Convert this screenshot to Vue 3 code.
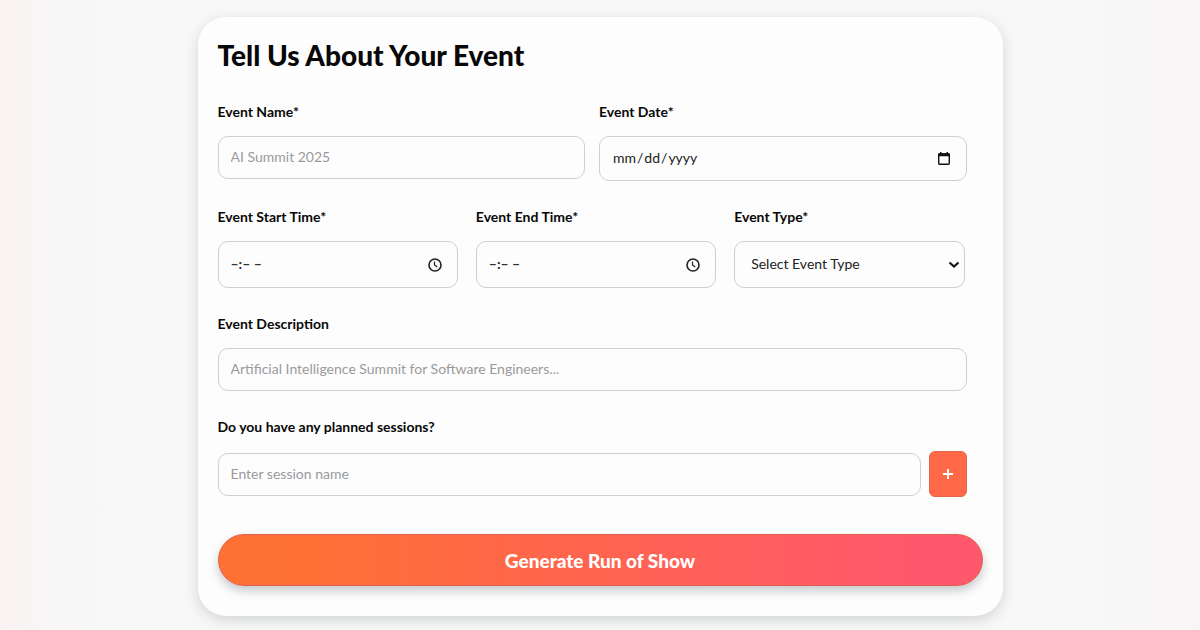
<script setup>
import { ref } from 'vue'

const name = ref('')
const date = ref('')
const start = ref('')
const end = ref('')
const type = ref('')
const description = ref('')
const session = ref('')
const sessions = ref([])

function addSession() {
  const value = session.value.trim()
  if (!value) return
  sessions.value.push(value)
  session.value = ''
}
</script>

<template>
  <main class="page">
    <form class="card" @submit.prevent>
      <h1 class="title">Tell Us About Your Event</h1>

      <div class="rows">
        <div class="row halves">
          <div class="field">
            <label for="name">Event Name*</label>
            <input id="name" v-model="name" class="control" type="text" placeholder="AI Summit 2025" />
          </div>
          <div class="field">
            <label for="date">Event Date*</label>
            <div class="picker">
              <input id="date" v-model="date" class="control date" type="date" />
              <svg class="icon" viewBox="0 0 16 16" aria-hidden="true">
                <rect x="2.7" y="3" width="10.6" height="10.3" rx="1" fill="none" stroke="#111" stroke-width="1.4" />
                <path d="M2.2 2.3h11.6v3H2.2zM4 1h1.5v2H4zM10.5 1H12v2h-1.5z" fill="#111" />
              </svg>
            </div>
          </div>
        </div>

        <div class="row thirds">
          <div class="field">
            <label for="start">Event Start Time*</label>
            <div class="picker">
              <input id="start" v-model="start" class="control time" type="text" placeholder="–:– –" />
              <svg class="icon" viewBox="0 0 16 16" aria-hidden="true">
                <circle cx="8" cy="8" r="6" fill="none" stroke="#222" stroke-width="1.6" />
                <path d="M7.5 4.5V8l2.8 2" fill="none" stroke="#222" stroke-width="1.2" />
              </svg>
            </div>
          </div>
          <div class="field">
            <label for="end">Event End Time*</label>
            <div class="picker">
              <input id="end" v-model="end" class="control time" type="text" placeholder="–:– –" />
              <svg class="icon" viewBox="0 0 16 16" aria-hidden="true">
                <circle cx="8" cy="8" r="6" fill="none" stroke="#222" stroke-width="1.6" />
                <path d="M7.5 4.5V8l2.8 2" fill="none" stroke="#222" stroke-width="1.2" />
              </svg>
            </div>
          </div>
          <div class="field">
            <label for="type">Event Type*</label>
            <div class="picker">
              <select id="type" v-model="type" class="control select">
                <option value="">Select Event Type</option>
                <option>Conference</option>
                <option>Workshop</option>
              </select>
              <svg class="chevron" viewBox="0 0 12 12" aria-hidden="true">
                <path d="M1.5 3.5 6 7.5l4.5-4" fill="none" stroke="#111" stroke-width="2.2" />
              </svg>
            </div>
          </div>
        </div>

        <div class="field">
          <label for="description">Event Description</label>
          <input id="description" v-model="description" class="control" type="text" placeholder="Artificial Intelligence Summit for Software Engineers..." />
        </div>

        <div class="field">
          <label for="session">Do you have any planned sessions?</label>
          <div class="session">
            <input id="session" v-model="session" class="control" type="text" placeholder="Enter session name" />
            <button class="add" type="button" aria-label="Add session" @click="addSession">
              <svg viewBox="0 0 12 12" aria-hidden="true">
                <path d="M6 1v10M1 6h10" stroke="#fff" stroke-width="2" />
              </svg>
            </button>
          </div>
          <ul v-if="sessions.length" class="list">
            <li v-for="item in sessions" :key="item">{{ item }}</li>
          </ul>
        </div>
      </div>

      <button class="submit" type="submit">Generate Run of Show</button>
    </form>
  </main>
</template>

<style>
body {
  margin: 0;
}
</style>

<style scoped>
.page {
  box-sizing: border-box;
  min-height: 100vh;
  padding: 17px 20px 14px;
  background: linear-gradient(to right, #f9f2f1 0%, #f8f6f6 4%, #f8f8f8 10%, #f8f8f8 90%, #f8f5f5 100%);
  font-family: Lato, "Liberation Sans", sans-serif;
  color: #080808;
}

.card {
  box-sizing: border-box;
  max-width: 805px;
  margin: 0 auto;
  padding: 20px 20px 30px;
  border-radius: 28px;
  background: #fdfdfd;
  box-shadow: 0 4px 14px rgba(40, 50, 60, 0.18);
}

.title {
  margin: 0 0 29px;
  font-size: 28px;
  line-height: 36px;
  font-weight: 900;
}

.rows {
  display: flex;
  flex-direction: column;
  gap: 26px;
  padding-right: 16px;
}

.row {
  display: grid;
  align-items: start;
}

.halves {
  grid-template-columns: 1fr 1fr;
  gap: 14px;
}

.thirds {
  grid-template-columns: 24fr 24fr 23fr;
  gap: 18px;
  padding-right: 2px;
}

.field {
  display: flex;
  flex-direction: column;
  gap: 14px;
  min-width: 0;
}

label {
  font-size: 14px;
  line-height: 20px;
  font-weight: 700;
}

.control {
  box-sizing: border-box;
  width: 100%;
  height: 43px;
  margin: 0;
  padding: 0 12px 2px;
  border: 1px solid #cfcfd3;
  border-radius: 10px;
  background: #fdfdfd;
  font-family: inherit;
  font-size: 14px;
  color: #222;
}

.control::placeholder {
  color: #9a9a9c;
  opacity: 1;
}

.picker {
  display: grid;
  align-items: center;
}

.picker > * {
  grid-area: 1 / 1;
}

.date {
  height: 45px;
}

.date::-webkit-calendar-picker-indicator {
  opacity: 0;
}

.time {
  height: 47px;
}

.time::placeholder {
  color: #333;
  font-weight: 900;
}

.select {
  height: 47px;
  padding: 0 16px 2px;
  appearance: none;
}

.icon {
  justify-self: end;
  width: 16px;
  height: 16px;
  margin-right: 15px;
  pointer-events: none;
}

.chevron {
  justify-self: end;
  width: 12px;
  height: 12px;
  margin-right: 5px;
  pointer-events: none;
}

.session {
  display: flex;
  align-items: center;
  gap: 8px;
}

.add {
  display: flex;
  flex: none;
  align-items: center;
  justify-content: center;
  width: 38px;
  height: 46px;
  padding: 0;
  border: 1px solid #e4674a;
  border-radius: 6px;
  background: #ff6947;
}

.add svg {
  width: 12px;
  height: 12px;
}

.list {
  margin: 0;
  padding-left: 20px;
  font-size: 14px;
}

.submit {
  width: 100%;
  height: 52px;
  margin-top: 37px;
  border: 1px solid #df5f52;
  border-radius: 26px;
  background: linear-gradient(to right, #ff7033 10%, #ff6450 50%, #ff586c 90%);
  box-shadow: 0 5px 10px rgba(40, 50, 60, 0.25);
  font-family: inherit;
  font-size: 19px;
  font-weight: 900;
  color: #fff;
}
</style>
